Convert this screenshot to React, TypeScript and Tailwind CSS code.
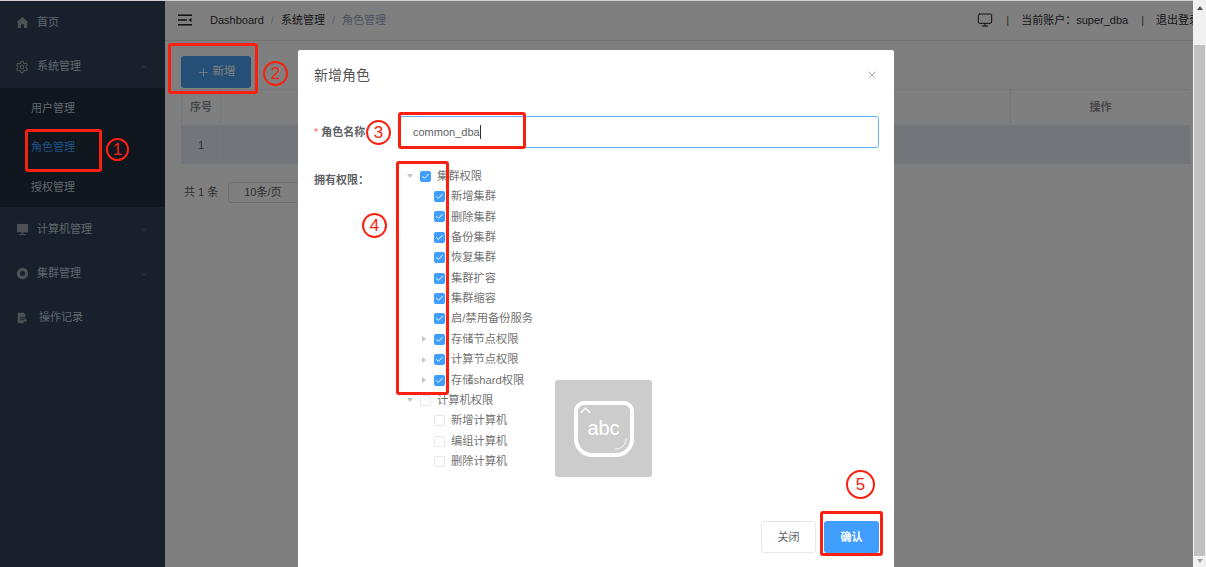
import { ChevronDown, ChevronUp, Monitor, Plus, X, Check, Settings } from "lucide-react";

const CJK = "font-['Liberation_Sans','Noto_Sans_CJK_SC',sans-serif]";

function HomeIcon() {
  return (
    <svg viewBox="0 0 14 14" className="w-[13px] h-[13px] text-[#9aa3ad]" fill="currentColor">
      <path d="M7 1 L13.5 7 L12 7 L12 13 L8.6 13 L8.6 9 L5.4 9 L5.4 13 L2 13 L2 7 L.5 7 Z" />
    </svg>
  );
}

function ScreenIcon() {
  return (
    <svg viewBox="0 0 14 14" className="w-[13px] h-[13px] text-[#9aa3ad]" fill="currentColor">
      <rect x="1" y="1" width="12" height="9" />
      <rect x="6" y="10" width="2" height="2" />
      <rect x="3.5" y="12" width="7" height="1" />
    </svg>
  );
}

function ClusterIcon() {
  return (
    <svg viewBox="0 0 14 14" className="w-[13px] h-[13px] text-[#9aa3ad]" fill="none" stroke="currentColor" strokeWidth={3.4}>
      <circle cx="7" cy="7" r="4.4" />
    </svg>
  );
}

function LogIcon() {
  return (
    <svg viewBox="0 0 14 14" className="w-[12px] h-[12px] text-[#9aa3ad]" fill="currentColor">
      <path d="M2 1h7l2 2v3H5v1.200h6v1.200H5v1.200h4.500L11 8l2 2-2 2v-1H9v2H2z" />
    </svg>
  );
}

function FoldIcon() {
  return (
    <svg viewBox="0 0 14 12" className="w-[14px] h-[12px] shrink-0 text-[#0c0c0c]" fill="currentColor">
      <rect x="0" y="0.500" width="14" height="1.400" />
      <rect x="0" y="5.300" width="9" height="1.400" />
      <rect x="0" y="10.100" width="14" height="1.400" />
      <path d="M13.500 4 L10.500 6 L13.500 8 Z" />
    </svg>
  );
}

function TreeCheck({ on }: { on: boolean }) {
  return on ? (
    <span className="w-[11px] h-[11px] rounded-[2px] bg-[#409eff] flex items-center justify-center shrink-0">
      <Check className="w-[9px] h-[9px] text-white" strokeWidth={2.5} />
    </span>
  ) : (
    <span className="w-[11px] h-[11px] rounded-[2px] bg-white border border-[#e4e7ed] shrink-0" />
  );
}

function TreeRow({
  label,
  on,
  child,
  arrow,
}: {
  label: string;
  on: boolean;
  child?: boolean;
  arrow?: "open" | "closed";
}) {
  return (
    <div className={`h-[20.4px] flex items-center ${child ? "pl-[34px]" : "pl-[20px]"}`}>
      <span className="w-[14px] -ml-[17px] mr-[3px] flex justify-center shrink-0">
        {arrow === "open" && (
          <span className="w-0 h-0 border-x-[3.500px] border-x-transparent border-t-[4px] border-t-[#c0c4cc]" />
        )}
        {arrow === "closed" && (
          <span className="w-0 h-0 border-y-[3.500px] border-y-transparent border-l-[4px] border-l-[#c0c4cc]" />
        )}
      </span>
      <TreeCheck on={on} />
      <span className="ml-[6px] text-[11.25px] text-[#737373]">{label}</span>
    </div>
  );
}

// annotation box drawn over the screenshot
function RedBox({ className }: { className: string }) {
  return <div className={`absolute border-[3px] border-[#f9200f] rounded-[3px] ${className}`} />;
}

function Step({ n, className }: { n: string; className: string }) {
  return (
    <div
      className={`absolute rounded-full border-2 border-[#f9200f] text-[#f9200f] flex items-center justify-center bg-transparent text-[17px] leading-none ${className}`}
    >
      {n}
    </div>
  );
}

const sideIcon = "w-[16px] flex justify-center mr-[7px]";
const sideRow = "h-[44px] flex items-center pl-[14px] pr-[16px] pt-[1px]";

export default function App() {
  return (
    <div className={`relative w-[1206px] h-[567px] overflow-hidden flex bg-white ${CJK}`}>
      <div className="relative w-[1193px] h-full flex overflow-hidden">
        <aside className="w-[165px] shrink-0 bg-[#304156] text-[11px] text-[#bfcbd9]">
          <div className={sideRow}>
            <span className={sideIcon}><HomeIcon /></span>首页
          </div>
          <div className={sideRow}>
            <span className={sideIcon}>
              <Settings className="w-[14px] h-[14px] text-[#9aa3ad]" strokeWidth={2} />
            </span>
            系统管理
            <ChevronUp className="ml-auto w-[10px] h-[10px] text-[#6d7887]" />
          </div>
          <div className="bg-[#1f2d3d] h-[119px] pl-[31px] flex flex-col pt-[1px]">
            <div className="h-[39px] flex items-center">用户管理</div>
            <div className="h-[39px] flex items-center">
              <span className="text-[#409eff]">角色管理</span>
            </div>
            <div className="h-[39px] flex items-center pt-[2px]">授权管理</div>
          </div>
          <div className={sideRow}>
            <span className={sideIcon}><ScreenIcon /></span>计算机管理
            <ChevronDown className="ml-auto w-[10px] h-[10px] text-[#6d7887]" />
          </div>
          <div className={sideRow}>
            <span className={sideIcon}><ClusterIcon /></span>集群管理
            <ChevronDown className="ml-auto w-[10px] h-[10px] text-[#6d7887]" />
          </div>
          <div className={sideRow}>
            <span className="w-[16px] flex justify-center mr-[9px]"><LogIcon /></span>操作记录
          </div>
        </aside>

        <main className="flex-1 min-w-0 bg-white">
          <header className="h-[41px] border-b border-[#e6e6e6] flex items-center pl-[13px] text-[11px] whitespace-nowrap overflow-hidden">
            <FoldIcon />
            <span className="ml-[18px] text-[#303133]">Dashboard</span>
            <span className="mx-[7px] text-[#c0c4cc]">/</span>
            <span className="text-[#303133]">系统管理</span>
            <span className="mx-[7px] text-[#c0c4cc]">/</span>
            <span className="text-[#97a8be]">角色管理</span>
            <div className="ml-auto -mr-[7px] flex items-center shrink-0">
              <Monitor className="w-[16px] h-[16px] shrink-0 text-[#222]" strokeWidth={1.5} />
              <span className="ml-[13px] text-[#555]">|</span>
              <span className="ml-[12px] text-[#303133]">当前账户：super_dba</span>
              <span className="ml-[13px] text-[#555]">|</span>
              <span className="ml-[12px] text-[#303133]">退出登录</span>
            </div>
          </header>

          <div className="pl-[16px] pr-[3px] pt-[15px]">
            <button className="w-[70px] h-[32px] rounded-[3px] bg-[#4d9fee] text-white text-[11.500px] flex items-center justify-center gap-[3px]">
              <Plus className="w-[13px] h-[13px]" strokeWidth={1.5} />新增
            </button>
            <div className="mt-[1px] border-t border-l border-[#ebeef5] text-[11px] text-[#606266]">
              <div className="flex h-[36px] font-bold text-[#909399] border-b border-[#ebeef5]">
                <div className="w-[39px] flex items-center justify-center border-r border-[#ebeef5]">序号</div>
                <div className="flex-1 border-r border-[#ebeef5]" />
                <div className="w-[179px] flex items-center justify-center">操作</div>
              </div>
              <div className="flex h-[38px] bg-[#e5eaf3]">
                <div className="w-[39px] flex items-center justify-center border-r border-[#ebeef5]">1</div>
                <div className="flex-1 border-r border-[#ebeef5]" />
                <div className="w-[179px]" />
              </div>
            </div>
            <div className="mt-[18px] flex items-center text-[11px] text-[#606266]">
              <span className="ml-[3px]">共 1 条</span>
              <div className="ml-[10px] w-[92px] h-[21px] border border-[#dcdfe6] rounded-[3px] flex items-center pl-[15px]">
                10条/页
                <ChevronDown className="ml-[19px] w-[10px] h-[10px] text-[#c0c4cc]" />
              </div>
            </div>
          </div>
        </main>

        <div className="absolute inset-0 bg-black/50">
          <div className="absolute left-[298px] top-[50px] w-[596px] h-[560px] bg-white flex flex-col rounded-[2px]">
            <div className="h-[50px] flex items-center justify-between pl-[16px] pr-[16px]">
              <span className="text-[14px] text-[#555]">新增角色</span>
              <X className="w-[12px] h-[12px] text-[#909399]" strokeWidth={1.5} />
            </div>
            <div className="flex items-center mt-[16px] h-[32px] pl-[16px] pr-[15px]">
              <span className="w-[85px] text-[11px] font-bold text-[#606266] whitespace-nowrap">
                <span className="text-[#f56c6c] font-normal mr-[3px]">*</span>角色名称
              </span>
              <div className="flex-1 h-[32px] rounded-[3px] border border-[#66b1ff] flex items-center pl-[13px] text-[11px] text-[#606266]">
                common_dba<span className="w-px h-[14px] bg-[#303133]" />
              </div>
            </div>
            <div className="flex mt-[18px] pl-[16px]">
              <span className="w-[86px] pt-[7px] text-[11px] font-bold text-[#606266] leading-[14px]">拥有权限：</span>
              <div>
                <TreeRow label="集群权限" on arrow="open" />
                <TreeRow label="新增集群" on child />
                <TreeRow label="删除集群" on child />
                <TreeRow label="备份集群" on child />
                <TreeRow label="恢复集群" on child />
                <TreeRow label="集群扩容" on child />
                <TreeRow label="集群缩容" on child />
                <TreeRow label="启/禁用备份服务" on child />
                <TreeRow label="存储节点权限" on child arrow="closed" />
                <TreeRow label="计算节点权限" on child arrow="closed" />
                <TreeRow label="存储shard权限" on child arrow="closed" />
                <TreeRow label="计算机权限" on={false} arrow="open" />
                <TreeRow label="新增计算机" on={false} child />
                <TreeRow label="编组计算机" on={false} child />
                <TreeRow label="删除计算机" on={false} child />
              </div>
            </div>
            <div className="flex justify-end gap-[8px] pr-[15px] mt-[49px]">
              <button className="w-[55px] h-[32px] rounded-[3px] bg-white border border-[#e4e7ed] text-[11px] text-[#606266]">关闭</button>
              <button className="w-[55px] h-[32px] rounded-[3px] bg-[#409eff] text-[11px] font-bold text-white">确认</button>
            </div>
          </div>
        </div>

        {/* thin light line along the top of the capture */}
        <div className="absolute left-0 right-0 top-0 h-px bg-[#cfcfcf]" />

        {/* IME popup sitting over the dialog */}
        <div className="absolute left-[555px] top-[380px] w-[97px] h-[97px] rounded-[3px] bg-[#cccccc] flex items-center justify-center">
          <div className="relative w-[60px] h-[56px] border-[4px] border-white rounded-[10px] rounded-b-[18px] flex items-center justify-center text-white text-[20px] font-['Liberation_Sans',sans-serif] pb-[2px]">
            abc
            <svg viewBox="0 0 12 7" className="absolute left-[2px] top-[2px] w-[11px] h-[7px] text-white" fill="none" stroke="currentColor" strokeWidth={1.5}>
              <path d="M1 6 L6 1 L11 6" />
            </svg>
            <svg viewBox="0 0 14 14" className="absolute right-[3px] bottom-[3px] w-[13px] h-[13px] text-white" fill="none" stroke="currentColor" strokeWidth={1}>
              <path d="M13 1 C13 8 9 13 1 13" />
            </svg>
          </div>
        </div>

        <RedBox className="left-[25px] top-[129px] w-[77px] h-[43px]" />
        <RedBox className="left-[168px] top-[43px] w-[90px] h-[51px]" />
        <RedBox className="left-[398px] top-[112px] w-[128px] h-[37px]" />
        <RedBox className="left-[396px] top-[161px] w-[53px] h-[234px]" />
        <RedBox className="left-[820px] top-[511px] w-[63px] h-[45px]" />
        <Step n="1" className="left-[106px] top-[138px] w-[23px] h-[23px]" />
        <Step n="2" className="left-[263px] top-[61px] w-[25px] h-[25px]" />
        <Step n="3" className="left-[366px] top-[120px] w-[25px] h-[25px]" />
        <Step n="4" className="left-[362px] top-[213px] w-[25px] h-[25px]" />
        <Step n="5" className="left-[846px] top-[470px] w-[29px] h-[29px]" />
      </div>

      <div className="w-[13px] h-full bg-[#f1f1f1] flex flex-col items-center">
        <div className="h-[45px] w-full flex justify-center pt-[6px]">
          <span className="w-0 h-0 border-x-[3.500px] border-x-transparent border-b-[4px] border-b-[#505050]" />
        </div>
        <div className="w-[11px] h-[511px] bg-[#c1c1c1]" />
        <div className="flex-1 w-full flex justify-center pt-[3px]">
          <span className="w-0 h-0 border-x-[3.500px] border-x-transparent border-t-[4px] border-t-[#a3a3a3]" />
        </div>
      </div>
    </div>
  );
}
